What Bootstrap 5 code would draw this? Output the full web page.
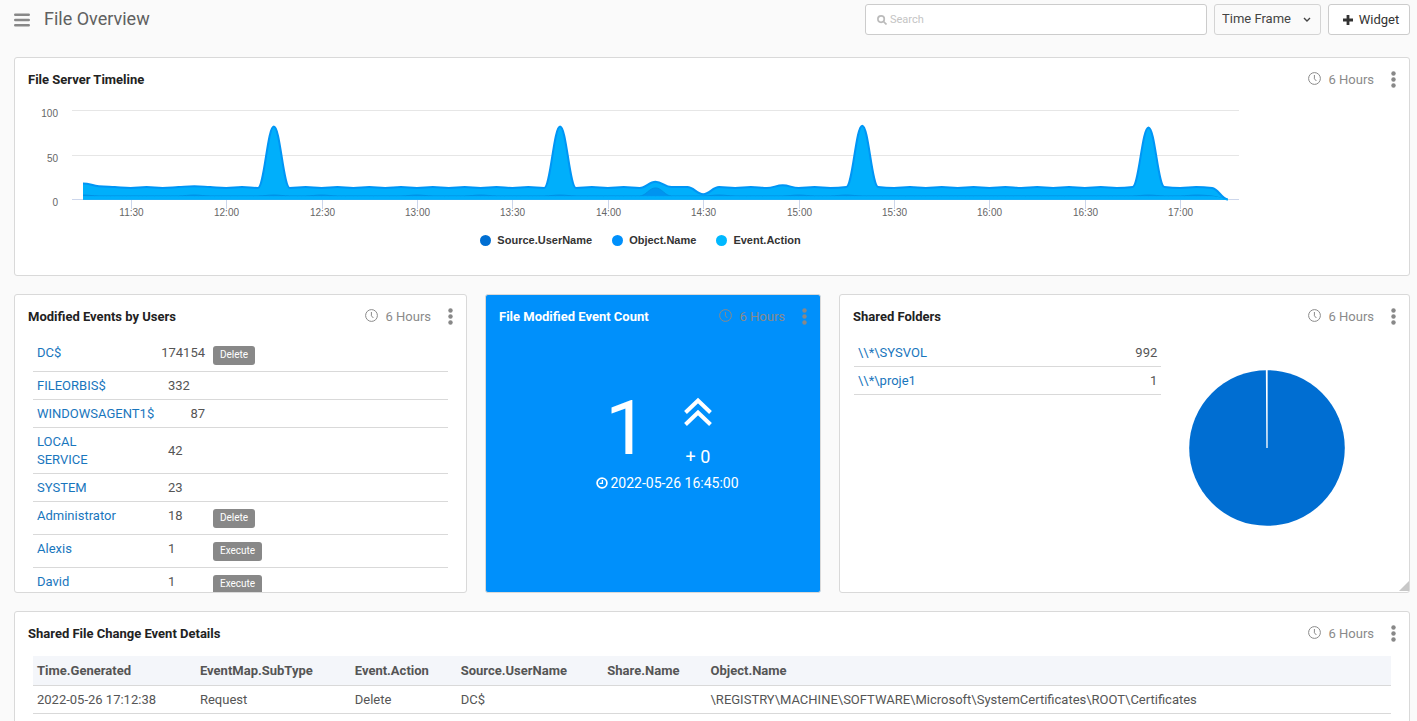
<!DOCTYPE html>
<html lang="en">
<head>
<meta charset="utf-8">
<meta name="viewport" content="width=device-width, initial-scale=1">
<title>File Overview</title>
<link href="https://cdn.jsdelivr.net/npm/bootstrap@5.3.0/dist/css/bootstrap.min.css" rel="stylesheet">
<style>
  body { background: #fafafa; color: #555; font: 13px/18px Roboto, sans-serif; }
  .board { padding: 4px 7px 0 14px; scrollbar-width: none; }
  .topbar { height: 31px; gap: 7px; margin-bottom: 22px; }
  .menu-btn { color: #888; line-height: 0; }
  .page-title { margin: 0 auto 0 7px; font-size: 18px; line-height: 28px; padding-bottom: 2px; font-weight: 400; color: #606060; }
  .search-box { width: 342px; }
  .search-box svg { left: 12px; top: 11px; color: #bbb; }
  .search-box .form-control { height: 31px; padding: 0 12px 0 24px; font-size: 11px; border-color: #ccc; border-radius: 3px; }
  .search-box .form-control::placeholder { color: #c4c4c4; opacity: 1; }
  .time-select { width: 107px; height: 31px; padding: 0 24px 2px 7px; font-size: 13px; color: #444; border-color: #d4d4d4; border-radius: 3px;
    background: #fafafa url("data:image/svg+xml,%3Csvg xmlns='http://www.w3.org/2000/svg' viewBox='0 0 8 6'%3E%3Cpath d='M1 1l3 3 3-3' fill='none' stroke='%23444' stroke-width='1.4'/%3E%3C/svg%3E") no-repeat right 9px center / 8px 6px; }
  .add-btn { width: 82px; height: 31px; gap: 6px; padding: 0 0 0 4px; font-size: 13px; color: #333; background: #fff; border: 1px solid #ccc; border-radius: 3px; }
  .widgets { display: grid; gap: 18px; grid-template-columns: 453fr 336fr 571fr; }
  .wide { grid-column: 1 / -1; }
  .widget { background: #fff; border: 1px solid #d9d9d9; border-radius: 3px; min-width: 0; }
  .widget-head { height: 44px; padding: 0 13px; }
  .widget-head h2 { font-size: 13px; line-height: 18px; font-weight: 700; color: #222; }
  .range { color: #8a8a8a; }
  .range svg { margin-right: 8px; }
  .dots { color: #888; line-height: 0; margin-left: 17px; }
  .chart-box { margin: 0 160px 0 17px; padding-bottom: 26px; }
  .chart-box svg { height: 120px; }
  .chart-box text { font: 10px "Liberation Sans", sans-serif; fill: #666; }
  .legend-row { gap: 20px; margin-top: 9px; font: bold 11px/18px "Liberation Sans", sans-serif; color: #333; }
  .legend-row i { width: 11px; height: 11px; border-radius: 50%; margin-right: 6px; }
  .data { width: 100%; table-layout: fixed; border-collapse: separate; border-spacing: 0; }
  .data td { padding: 5px 4px 4px; border-bottom: 1px solid #d9d9d9; }
  .data a { color: #1976bd; text-decoration: none; }
  .users { height: 253px; padding: 0 18px; overflow: auto; scrollbar-width: none; }
  .users .name-col { width: 125px; }
  .users .count-col { width: 51px; }
  .users .count { padding-left: 10px; }
  .users .count.text-end { padding-left: 0; }
  .users .tagged td { height: 33px; vertical-align: top; }
  .users .tagged td:last-child { padding: 7px 4px 6px; line-height: 0; }
  .tag { display: inline-block; height: 19px; padding: 0 7px; font-size: 10px; line-height: 18px; color: #fff; background: #888; border-radius: 3px; }
  .counter { background: #0090fb; color: #fff; }
  .counter h2 { color: #fff; }
  .counter-body { padding: 50px 0 0 11px; }
  .big { font-size: 76px; line-height: 78px; padding-right: 12px; }
  .delta { font-size: 18px; line-height: 20px; }
  .stamp { font-size: 14px; line-height: 18px; gap: 2px; margin: 7px 0 0 18px; }
  .folders { width: 54%; margin-left: 14px; }
  .pie-box { width: 37%; padding-top: 31px; }
  .grip { right: 0; bottom: 1px; width: 10px; height: 10px; background: #c8c8c8; clip-path: polygon(100% 0, 100% 100%, 0 100%); }
  .details { padding: 0 18px 60px; }
  .details th { padding: 6px 4px 5px; background: #f4f6fa; border-bottom: 1px solid #d9d9d9; color: #555; height: 30px; }
</style>
</head>
<body>
<svg class="d-none" aria-hidden="true">
  <symbol id="clock" viewBox="0 0 13 16"><circle cx="6.5" cy="6.5" r="5.9" fill="none" stroke="currentColor"/><path d="M6.4 3v3.8l2 2.2" fill="none" stroke="currentColor"/></symbol>
  <symbol id="dots" viewBox="0 0 5 18"><circle cx="2.5" cy="2.5" r="2.2"/><circle cx="2.5" cy="8.5" r="2.2"/><circle cx="2.5" cy="14.5" r="2.2"/></symbol>
</svg>

<main class="board vh-100 overflow-auto">
  <header class="topbar d-flex align-items-center">
    <button class="menu-btn btn p-0 border-0" type="button" aria-label="Menu">
      <svg width="16" height="14" viewBox="0 0 16 14" stroke="currentColor" stroke-width="2.6" stroke-linecap="round"><path d="M1.3 1.8h13.4M1.3 7h13.4M1.3 12.2h13.4"/></svg>
    </button>
    <h1 class="page-title">File Overview</h1>
    <div class="search-box position-relative">
      <svg class="position-absolute" width="10" height="10" viewBox="0 0 10 10" fill="none" stroke="currentColor" stroke-width="1.7"><circle cx="4.1" cy="4.1" r="3.2"/><path d="M6.5 6.5l3 3"/></svg>
      <input class="form-control" type="search" placeholder="Search" aria-label="Search">
    </div>
    <select class="form-select time-select" aria-label="Time frame"><option>Time Frame</option></select>
    <button class="btn add-btn d-flex align-items-center justify-content-center" type="button">
      <svg width="10" height="10" viewBox="0 0 10 10" stroke="currentColor" stroke-width="2.8"><path d="M5 0v10M0 5h10"/></svg>Widget
    </button>
  </header>

  <div class="widgets">
    <section class="widget wide">
      <div class="widget-head d-flex align-items-center">
        <h2 class="mb-0 me-auto">File Server Timeline</h2>
        <span class="range d-flex align-items-center"><svg width="13" height="16"><use href="#clock"/></svg>6 Hours</span>
        <button class="dots btn p-0 border-0" type="button" aria-label="Options"><svg width="5" height="18" fill="currentColor"><use href="#dots"/></svg></button>
      </div>
      <div class="chart-box">
        <svg id="timeline" class="d-block w-100" role="img" aria-label="File server timeline"></svg>
        <div class="legend-row d-flex justify-content-center">
          <span class="d-flex align-items-center"><i style="background:#006ed2"></i>Source.UserName</span>
          <span class="d-flex align-items-center"><i style="background:#0090fb"></i>Object.Name</span>
          <span class="d-flex align-items-center"><i style="background:#00b8ff"></i>Event.Action</span>
        </div>
      </div>
    </section>

    <section class="widget overflow-hidden">
      <div class="widget-head d-flex align-items-center">
        <h2 class="mb-0 me-auto">Modified Events by Users</h2>
        <span class="range d-flex align-items-center"><svg width="13" height="16"><use href="#clock"/></svg>6 Hours</span>
        <button class="dots btn p-0 border-0" type="button" aria-label="Options"><svg width="5" height="18" fill="currentColor"><use href="#dots"/></svg></button>
      </div>
      <div class="users">
        <table class="data">
          <colgroup><col class="name-col"><col class="count-col"><col></colgroup>
          <tbody>
            <tr class="tagged"><td><a href="#">DC$</a></td><td class="count text-end">174154</td><td><span class="tag">Delete</span></td></tr>
            <tr><td><a href="#">FILEORBIS$</a></td><td class="count">332</td><td></td></tr>
            <tr><td><a href="#">WINDOWSAGENT1$</a></td><td class="count text-end">87</td><td></td></tr>
            <tr><td><a href="#">LOCAL<br>SERVICE</a></td><td class="count">42</td><td></td></tr>
            <tr><td><a href="#">SYSTEM</a></td><td class="count">23</td><td></td></tr>
            <tr class="tagged"><td><a href="#">Administrator</a></td><td class="count">18</td><td><span class="tag">Delete</span></td></tr>
            <tr class="tagged"><td><a href="#">Alexis</a></td><td class="count">1</td><td><span class="tag">Execute</span></td></tr>
            <tr class="tagged"><td><a href="#">David</a></td><td class="count">1</td><td><span class="tag">Execute</span></td></tr>
          </tbody>
        </table>
      </div>
    </section>

    <section class="widget counter">
      <div class="widget-head d-flex align-items-center">
        <h2 class="mb-0 me-auto">File Modified Event Count</h2>
        <span class="range d-flex align-items-center"><svg width="13" height="16"><use href="#clock"/></svg>6 Hours</span>
        <button class="dots btn p-0 border-0" type="button" aria-label="Options"><svg width="5" height="18" fill="currentColor"><use href="#dots"/></svg></button>
      </div>
      <div class="counter-body">
        <div class="d-flex justify-content-center gap-4">
          <div class="big">1</div>
          <div class="d-flex flex-column align-items-center justify-content-between pt-2">
            <svg width="28" height="30" viewBox="0 0 28 30" fill="none" stroke="#fff" stroke-width="4"><path d="M1.500 15.500L14 3.500l12.500 12M1.500 27.500L14 15.500l12.500 12"/></svg>
            <span class="delta">+ 0</span>
          </div>
        </div>
        <div class="stamp d-flex align-items-center justify-content-center">
          <svg width="12" height="12" viewBox="0 0 12 12" fill="none" stroke="#fff" stroke-width="1.700"><circle cx="6" cy="6" r="4.900"/><path d="M6.400 3v3.400H3.600" stroke-width="1.300"/></svg>
          2022-05-26 16:45:00
        </div>
      </div>
    </section>

    <section class="widget position-relative">
      <div class="widget-head d-flex align-items-center">
        <h2 class="mb-0 me-auto">Shared Folders</h2>
        <span class="range d-flex align-items-center"><svg width="13" height="16"><use href="#clock"/></svg>6 Hours</span>
        <button class="dots btn p-0 border-0" type="button" aria-label="Options"><svg width="5" height="18" fill="currentColor"><use href="#dots"/></svg></button>
      </div>
      <div class="d-flex align-items-start">
        <div class="folders">
          <table class="data">
            <tbody>
              <tr><td><a href="#">\\*\SYSVOL</a></td><td class="text-end">992</td></tr>
              <tr><td><a href="#">\\*\proje1</a></td><td class="text-end">1</td></tr>
            </tbody>
          </table>
        </div>
        <div class="pie-box d-flex justify-content-center">
          <svg width="156" height="156" viewBox="0 0 156 156" role="img" aria-label="Shared folders"><circle cx="78" cy="78" r="77.800" fill="#006ed2"/><path d="M78 78V0M78 78L77.500 0" stroke="#fff" stroke-width="1.300"/></svg>
        </div>
      </div>
      <span class="grip position-absolute"></span>
    </section>

    <section class="widget wide">
      <div class="widget-head d-flex align-items-center">
        <h2 class="mb-0 me-auto">Shared File Change Event Details</h2>
        <span class="range d-flex align-items-center"><svg width="13" height="16"><use href="#clock"/></svg>6 Hours</span>
        <button class="dots btn p-0 border-0" type="button" aria-label="Options"><svg width="5" height="18" fill="currentColor"><use href="#dots"/></svg></button>
      </div>
      <div class="details">
        <table class="data">
          <colgroup><col style="width:12%"><col style="width:11.4%"><col style="width:7.8%"><col style="width:10.8%"><col style="width:7.6%"><col></colgroup>
          <thead>
            <tr><th>Time.Generated</th><th>EventMap.SubType</th><th>Event.Action</th><th>Source.UserName</th><th>Share.Name</th><th>Object.Name</th></tr>
          </thead>
          <tbody>
            <tr><td>2022-05-26 17:12:38</td><td>Request</td><td>Delete</td><td>DC$</td><td></td><td>\REGISTRY\MACHINE\SOFTWARE\Microsoft\SystemCertificates\ROOT\Certificates</td></tr>
          </tbody>
        </table>
      </div>
    </section>
  </div>
</main>

<script src="https://cdn.jsdelivr.net/npm/bootstrap@5.3.0/dist/js/bootstrap.bundle.min.js"></script>
<script>
  // One sample every five minutes, 11:15 to 17:15.
  const COUNT = 73;
  const objects = Array.from({ length: COUNT }, (_, i) => i % 2 ? 13 : 14);
  Object.assign(objects, { 0: 18, 1: 15, 6: 14, 7: 15, 12: 82, 30: 82, 36: 20, 37: 14, 38: 14, 39: 6, 44: 16, 48: 14, 49: 83, 50: 14, 66: 14, 67: 81, 68: 14, 71: 13, 72: 0 });
  const users = Array.from({ length: COUNT }, () => 4);
  Object.assign(users, { 0: 5, 7: 5, 12: 5, 15: 5, 21: 5, 25: 5, 30: 5, 36: 13, 40: 5, 45: 5, 48: 5, 67: 5, 70: 5, 72: 0 });
  const actions = Array.from({ length: COUNT }, () => 3);
  actions[COUNT - 1] = 0;

  const svg = document.getElementById('timeline');
  const TOP = 8.5, BASE = 97.5;

  function draw() {
    const width = Math.round(svg.getBoundingClientRect().width);
    const left = 40, right = width - 10;
    const step = (right - left - 22) / (COUNT - 1);
    const px = i => left + 11 + i * step;
    const py = v => BASE - v * (BASE - TOP) / 100;

    // Smooth curve whose tangent is flat at each local extreme.
    function curve(values) {
      const slope = i => {
        if (i === 0 || i === COUNT - 1) return 0;
        const a = values[i] - values[i - 1], b = values[i + 1] - values[i];
        return a * b <= 0 ? 0 : 2 * a * b / (a + b);
      };
      let d = `M${px(0)} ${py(values[0])}`;
      for (let i = 1; i < COUNT; i++) {
        const h = step * .4;
        d += `C${px(i - 1) + h} ${py(values[i - 1] + slope(i - 1) * .4)} ${px(i) - h} ${py(values[i] - slope(i) * .4)} ${px(i)} ${py(values[i])}`;
      }
      return d;
    }
    const area = (values, fill, stroke, weight) => {
      const d = curve(values);
      return `<path d="${d}V${BASE}H${px(0)}Z" fill="${fill}"/><path d="${d}" fill="none" stroke="${stroke}" stroke-width="${weight}"/>`;
    };

    let out = '';
    [[100, TOP], [50, 53.5], [0, BASE]].forEach(([label, y]) => {
      out += `<path d="M${left} ${y}H${right}" stroke="${label ? '#e6e6e6' : '#ccd6eb'}"/>`;
      out += `<text x="26" y="${y + 6}" text-anchor="end">${label}</text>`;
    });
    for (let i = 3; i < COUNT; i += 6) {
      const minutes = 675 + i * 5, x = Math.round(px(i)) + .5;
      const label = Math.floor(minutes / 60) + ':' + String(minutes % 60).padStart(2, '0');
      out += `<path d="M${x} 98v9" stroke="#ccd6eb"/><text x="${x}" y="114" text-anchor="middle">${label}</text>`;
    }
    out += area(objects, '#00affb', '#0095f5', 2);
    out += area(users, '#0094f0', '#0090e4', 1);
    out += area(actions, '#00affb', '#00b4ff', 1);
    svg.setAttribute('viewBox', `0 0 ${width} 120`);
    svg.innerHTML = out;
  }
  draw();
  addEventListener('resize', draw);
</script>
</body>
</html>
